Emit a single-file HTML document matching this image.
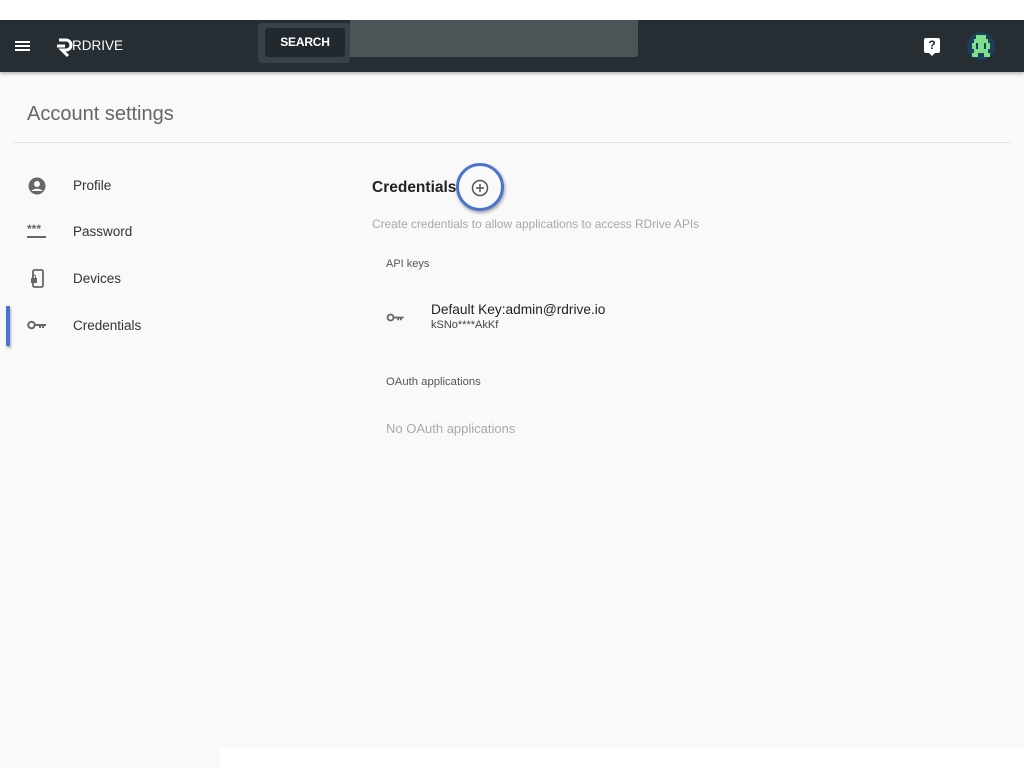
<!DOCTYPE html>
<html><head><meta charset="utf-8"><style>
*{margin:0;padding:0;box-sizing:border-box}
body{width:1024px;height:768px;background:#fff;font-family:"Liberation Sans",Arial,sans-serif;position:relative;overflow:hidden}
.bg{position:absolute;left:0;top:72px;width:1024px;height:676px;background:#f9f9f9}
.bl{position:absolute;left:0;top:748px;width:220px;height:20px;background:#f9f9f9}
.hdr{position:absolute;left:0;top:20px;width:1024px;height:52px;background:#262d33;box-shadow:0 2px 3px rgba(0,0,0,.25)}
.a{position:absolute}
.t{position:absolute;white-space:nowrap}
</style></head><body>
<div class="bg"></div><div class="bl"></div>
<div class="hdr">
  <div class="a" style="left:15px;top:21px;width:15px;height:2px;background:#fff;box-shadow:0 4px 0 #fff,0 8px 0 #fff"></div>
  <svg class="a" style="left:56px;top:17px" width="18" height="20" viewBox="0 0 18 20"><path d="M3 3h7a5 5 0 0 1 0 10H6l6 6" fill="none" stroke="#fff" stroke-width="3"/><path d="M1 9h8" stroke="#fff" stroke-width="3"/></svg>
  <div class="t" style="left:72px;top:18px;color:#fff;font-size:13.5px">RDRIVE</div>
  <div class="a" style="left:258px;top:3px;width:92px;height:40px;background:#3a4146;border-radius:3px"></div>
  <div class="a" style="left:350px;top:0;width:288px;height:37px;background:#4b5457;border-radius:0 0 3px 0"></div>
  <div class="a" style="left:265px;top:8px;width:80px;height:29px;background:#22292e;border-radius:3px;color:#fff;font-size:12px;text-align:center;line-height:29px;font-weight:bold;letter-spacing:-0.2px">SEARCH</div>
  <div class="a" style="left:924px;top:18px;width:16px;height:15px;background:#fff;border-radius:2px;color:#262d33;font-size:12px;font-weight:bold;text-align:center;line-height:15px">?</div>
  <div class="a" style="left:928px;top:32px;width:0;height:0;border-left:4px solid transparent;border-right:4px solid transparent;border-top:4px solid #fff"></div>
  <div class="a" style="left:967px;top:12px;width:28px;height:28px;border-radius:50%;background:#1e3f5c"></div>
  <svg class="a" style="left:970px;top:15px" width="22" height="22" viewBox="0 0 11 11"><g fill="#7ee08a"><rect x="3" y="0" width="5" height="2"/><rect x="2" y="2" width="7" height="2"/><rect x="1" y="4" width="2" height="3"/><rect x="8" y="4" width="2" height="3"/><rect x="4" y="4" width="3" height="3"/><rect x="2" y="7" width="7" height="2"/><rect x="1" y="9" width="3" height="2"/><rect x="7" y="9" width="3" height="2"/></g></svg>
</div>
<div class="t" style="left:27px;top:103px;font-size:20px;color:#666">Account settings</div>
<div class="a" style="left:14px;top:142px;width:996px;height:1px;background:#e2e2e2"></div>
<svg class="a" style="left:28px;top:177px" width="18" height="18" viewBox="0 0 18 18"><circle cx="9" cy="9" r="8.5" fill="#666"/><circle cx="9" cy="7" r="3" fill="#f9f9f9"/><path d="M3.5 14c2-3 9-3 11 0" fill="#f9f9f9"/></svg>
<div class="t" style="left:73px;top:178px;font-size:13.5px;color:#333">Profile</div>
<div class="t" style="left:27px;top:225px;font-size:12px;color:#666;letter-spacing:0px;font-weight:bold;line-height:8px">***</div>
<div class="a" style="left:27px;top:236px;width:19px;height:1.5px;background:#666"></div>
<div class="t" style="left:73px;top:224px;font-size:13.5px;color:#333">Password</div>
<svg class="a" style="left:30px;top:269px" width="15" height="19" viewBox="0 0 15 19"><rect x="3" y="1" width="10" height="17" rx="1.5" fill="none" stroke="#666" stroke-width="1.8"/><rect x="1" y="9" width="6" height="5" fill="#666"/><path d="M2.5 9V7.5a1.5 1.5 0 0 1 3 0V9" fill="none" stroke="#666"/></svg>
<div class="t" style="left:73px;top:271px;font-size:13.5px;color:#333">Devices</div>
<div class="a" style="left:6px;top:306px;width:4px;height:40px;background:#4a74d0;box-shadow:1px 2px 2px rgba(0,0,0,.3)"></div>
<svg class="a" style="left:27px;top:320px" width="20" height="10" viewBox="0 0 20 10"><circle cx="4.5" cy="5" r="3.3" fill="none" stroke="#666" stroke-width="2"/><path d="M8 4h11v2h-2v2h-2V6h-1v2h-2V6H8z" fill="#666"/></svg>
<div class="t" style="left:73px;top:318px;font-size:13.5px;color:#333">Credentials</div>
<div class="t" style="left:372px;top:179px;font-size:15.5px;color:#222;font-weight:bold">Credentials</div>
<div class="a" style="left:456px;top:163px;width:48px;height:48px;border-radius:50%;border:3px solid #4a74d0;box-shadow:1px 2px 3px rgba(0,0,0,.35)"></div>
<svg class="a" style="left:471px;top:179px" width="18" height="18" viewBox="0 0 18 18"><circle cx="9" cy="9" r="7.5" fill="none" stroke="#555" stroke-width="1.5"/><path d="M9 5v8M5 9h8" stroke="#555" stroke-width="1.5"/></svg>
<div class="t" style="left:372px;top:217px;font-size:11.9px;color:#a8a8a8">Create credentials to allow applications to access RDrive APIs</div>
<div class="t" style="left:386px;top:258px;font-size:11px;color:#555">API keys</div>
<svg class="a" style="left:386px;top:313px" width="19" height="9" viewBox="0 0 20 10"><circle cx="4.5" cy="5" r="3.3" fill="none" stroke="#666" stroke-width="2"/><path d="M8 4h11v2h-2v2h-2V6h-1v2h-2V6H8z" fill="#666"/></svg>
<div class="t" style="left:431px;top:302px;font-size:13.7px;color:#222">Default Key:admin@rdrive.io</div>
<div class="t" style="left:431px;top:319px;font-size:11px;color:#444">kSNo****AkKf</div>
<div class="t" style="left:386px;top:376px;font-size:11.3px;color:#555">OAuth applications</div>
<div class="t" style="left:386px;top:421px;font-size:13px;color:#aaa">No OAuth applications</div>
</body></html>
